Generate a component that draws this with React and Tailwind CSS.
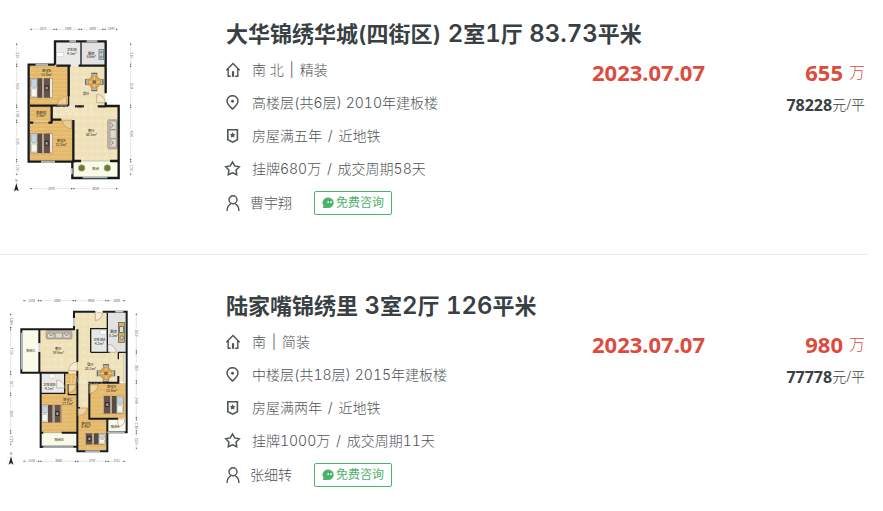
const cjk = "font-['Inter','Noto_Sans_CJK_SC',sans-serif]";

function HomeIcon() {
  return (
    <svg className="h-4 w-4 shrink-0" viewBox="0 0 16 16" fill="none" stroke="currentColor" strokeWidth="1.4" aria-hidden="true">
      <path d="M.3 8.2 7 1.600l6.700 6.600M2.200 7v7.300h2.600M11.800 7v7.300H9.200" />
      <path d="M7 9.200v5.600" strokeWidth="2.2" />
    </svg>
  );
}

function PinIcon() {
  return (
    <svg className="h-4 w-4 shrink-0" viewBox="0 0 16 16" fill="none" stroke="currentColor" strokeWidth="1.5" aria-hidden="true">
      <path d="M6.500 14C4 11.600 1 9.200 1 6.200a5.500 5.500 0 0 1 11 0C12 9.200 9 11.600 6.500 14Z" />
      <circle cx="6.500" cy="6.200" r="1.500" fill="currentColor" stroke="none" />
    </svg>
  );
}

function BadgeIcon() {
  return (
    <svg className="h-4 w-4 shrink-0" viewBox="0 0 16 16" fill="none" stroke="currentColor" strokeWidth="1.6" aria-hidden="true">
      <path d="M1.800 1.800h9.600v10L6.600 14.200 1.800 11.800Z" />
      <path d="m6.600 4.200.9 1.800 2 .3-1.500 1.400.4 2-1.800-1-1.800 1 .4-2-1.500-1.400 2-.3Z" fill="currentColor" stroke="none" />
    </svg>
  );
}

function StarIcon() {
  return (
    <svg className="h-4 w-4 shrink-0 overflow-visible" viewBox="0 0 16 16" fill="none" stroke="currentColor" strokeWidth="1.5" aria-hidden="true">
      <path d="m6.500 1 2.200 3.900 4.600.9-3.200 3.300.6 4.700-4.200-1.900-4.200 1.900.6-4.700L-.3 5.800l4.600-.9Z" />
    </svg>
  );
}

function UserIcon() {
  return (
    <svg className="h-4 w-4 shrink-0" viewBox="0 0 16 16" fill="none" stroke="currentColor" strokeWidth="1.4" aria-hidden="true">
      <circle cx="7" cy="4.800" r="4" />
      <path d="M1 16c0-4 1.800-6 4-7.300M13 16c0-4-1.800-6-4-7.300" />
    </svg>
  );
}

function ChatIcon() {
  return (
    <svg className="h-3 w-3 shrink-0" viewBox="0 0 12 12" aria-hidden="true">
      <path d="M6.200.6a5.500 5.200 0 1 1 0 10.400H.8l.7-2.200A5.200 5.200 0 0 1 6.200.6Z" fill="currentColor" />
      <circle cx="6.200" cy="5.200" r=".9" fill="white" />
      <circle cx="9" cy="5.200" r=".9" fill="white" />
    </svg>
  );
}

function Bed({ x, y, w = 66, h = 58, flip = false }) {
  return (
    <g transform={flip ? `translate(${x + w} ${y}) scale(-1 1)` : `translate(${x} ${y})`}>
      <rect width={w} height={h} fill="#eee9df" stroke="#8a7356" strokeWidth="1.500" />
      <rect x="2" y="3" width="17" height={h / 2 - 5} rx="4" fill="#c5d4dc" stroke="#6d7378" />
      <rect x="2" y={h / 2 + 2} width="17" height={h / 2 - 5} rx="4" fill="#f7f5ec" stroke="#6d7378" />
      <rect x="20" width="14" height={h} fill="#594a42" />
      <rect x="34" width="6" height={h} fill="#b5a899" />
      <rect x="40" width="18" height={h} fill="#665248" />
      <rect x="42" y={h / 2 - 8} width="12" height="15" fill="#302a29" />
      <path d={`M45 ${h / 2 - 4}h6v8h-6z`} fill="#b5a899" />
    </g>
  );
}

function Dining({ x, y }) {
  return (
    <g transform={`translate(${x} ${y})`} stroke="#5f6060" strokeWidth="1.500">
      {[0, 90, 180, 270].map((a) => (
        <g key={a} transform={`rotate(${a})`}>
          <rect x="-8" y="-26" width="16" height="12" rx="2" fill="#b9b9b2" />
          <path d="M-9-26H9" strokeWidth="3" />
        </g>
      ))}
      <circle r="18" fill="#dca54b" stroke="#ad7a30" />
      <path d="M-17 0h34M0-17v34" stroke="#f0d79c" strokeWidth="3" />
      <circle r="5" fill="#7b6a50" />
    </g>
  );
}

function Sofa({ x, y, w, h }) {
  const tall = h > w;
  return (
    <g transform={`translate(${x} ${y})`} stroke="#82786d" strokeWidth="1.500" fill="#c3bbb0">
      <rect width={w} height={h} rx="4" />
      {[0, 1, 2].map((i) => (
        <rect
          key={i}
          x={tall ? 7 : 4 + (i * (w - 8)) / 3}
          y={tall ? 4 + (i * (h - 8)) / 3 : 7}
          width={tall ? w - 10 : (w - 12) / 3}
          height={tall ? (h - 12) / 3 : h - 10}
          rx="3"
          fill="#ded8cd"
        />
      ))}
      <path d={tall ? "M9 10l8 7-8 7M10 63l8 6-8 6" : "M9 8l7 8 7-8M55 8l7 8 7-8"} fill="none" stroke="#62584e" strokeWidth="2" />
    </g>
  );
}

function Label({ x, y, name, area }) {
  return (
    <g fontSize="10" fontWeight="500" fill="#39342b" textAnchor="middle">
      <text x={x} y={y}>{name}</text>
      {area && <text x={x} y={y + 11}>{area}</text>}
    </g>
  );
}

function Ruler({ at, stops, values, vertical = false }) {
  return (
    <g transform={vertical ? `translate(${at} 0) rotate(90)` : `translate(0 ${at})`} fill="#555" stroke="#999" fontSize="9">
      {values.map((v, i) => {
        const a = stops[i];
        const b = stops[i + 1];
        const m = (a + b) / 2;
        return (
          <g key={i}>
            <path d={`M${a} 0H${m - 13}M${m + 13} 0H${b}`} strokeWidth=".8" />
            <path d={`M${a - 1} 0l5-2.500v5zM${b - 1} 0l-5-2.500v5z`} stroke="none" />
            <text x={m} y="3" textAnchor="middle" stroke="none">{v}</text>
          </g>
        );
      })}
    </g>
  );
}

function North({ x, y }) {
  return (
    <g transform={`translate(${x} ${y})`}>
      <circle r="12" fill="none" stroke="#ddd" />
      <path d="M0-13 7 12 0 7-7 12Z" fill="#222" />
      <text x="0" y="-17" fontSize="9" textAnchor="middle" fill="#444">N</text>
    </g>
  );
}

function Patterns({ id }) {
  return (
    <defs>
      <pattern id={`${id}-wood`} width="36" height="24" patternUnits="userSpaceOnUse">
        <rect width="36" height="24" fill="#e6bb6e" />
        <path d="M0 0h36M0 12h36M9 0v12M27 12v12" stroke="#daaa5c" strokeWidth="1" />
        <path d="M2 5h28M8 18h25" stroke="#edc983" strokeWidth="2" />
      </pattern>
      <pattern id={`${id}-tile`} width="22" height="22" patternUnits="userSpaceOnUse">
        <rect width="22" height="22" fill="#f0e2bb" />
        <path d="M0 0h22M0 0v22" stroke="#e9d6a6" />
        <path d="M4 15l5-6 7 3" stroke="#f5ebcd" strokeWidth="3" fill="none" />
      </pattern>
    </defs>
  );
}

function PlanA() {
  return (
    <svg className="h-full w-full font-['Noto_Sans_CJK_SC',sans-serif]" viewBox="0 0 450 555" role="img" aria-label="两室一厅户型图">
      <Patterns id="a" />
      <path d="M205 152H316V272H355V438H220V316H155V276H205Z" fill="url(#a-tile)" />
      <rect x="165" y="82" width="78" height="70" fill="#e8e8e6" />
      <rect x="243" y="82" width="73" height="70" fill="#e2e2e2" />
      <rect x="90" y="152" width="115" height="120" fill="url(#a-wood)" />
      <rect x="90" y="272" width="66" height="48" fill="url(#a-wood)" />
      <path d="M90 320H155V314H218V438H90Z" fill="url(#a-wood)" />
      <rect x="220" y="438" width="135" height="48" fill="#fafae8" />
      <Bed x={92} y={190} />
      <Bed x={92} y={356} />
      <Dining x={283} y={201} />
      <Sofa x={323} y={314} w={29} h={88} />
      <rect x="169" y="113" width="22" height="12" fill="#fff" stroke="#aaa" />
      <g fill="#c2d1d3" stroke="#55656b" strokeWidth="2"><rect x="297" y="104" width="14" height="29" /><circle cx="304" cy="112" r="3" /><circle cx="304" cy="126" r="3" /></g>
      <g fill="#687b3a" stroke="#b0b890" strokeWidth="2"><circle cx="245" cy="459" r="10" /><circle cx="322" cy="459" r="10" /></g>
      <g fill="none" stroke="#171b1c" strokeWidth="7">
        <path d="M165 149V79H317V235M317 262V273H356V489H217V440M165 149H86V440H220V315M169 152H212M236 152H318M206 152V244M90 272H205M155 272V322M156 314H184M225 274H252M293 274H317M90 323H100M145 323H157M217 438H243M330 438H356" />
        <path d="M243 82V152M206 152V272" strokeWidth="4" />
      </g>
      <g stroke="#c7d1d3" strokeWidth="6"><path d="M208 79H228M260 79H292M107 149H144M123 440H165M248 487H322M215 460V478" /></g>
      <g stroke="#849094" strokeWidth="1.500" fill="none"><path d="M208 79H228M260 79H292M107 149H144M123 440H165M248 487H322M243 438H330M100 323H145" /></g>
      <g fill="#f5eddb" stroke="#a58351" strokeWidth="1.500">
        <path d="M200 272H172A28 28 0 0 1 200 244ZM214 316V342A28 28 0 0 1 187 316ZM316 263H290V238A26 26 0 0 1 316 263Z" fillOpacity=".35" />
      </g>
      <text x="222" y="300" fontSize="34" textAnchor="middle" fill="#fff" fillOpacity=".3">LIANJIA</text>
      <Label x={215} y={109} name="卫生间" area="4.1m²" />
      <Label x={274} y={119} name="厨房" area="6.6m²" />
      <Label x={140} y={171} name="卧室B" area="11.0m²" />
      <Label x={258} y={240} name="餐厅" />
      <Label x={123} y={296} name="衣帽间" area="2.8m²" />
      <Label x={274} y={351} name="客厅" area="30.5m²" />
      <Label x={184} y={381} name="卧室A" area="12.5m²" />
      <Label x={287} y={464} name="阳台" />
      <Ruler at={43} stops={[91, 167, 242, 313, 354]} values={["2372", "2390", "2080", "1347"]} />
      <Ruler at={521} stops={[91, 219, 354]} values={["3875", "3859"]} />
      <Ruler at={50} stops={[85, 152, 275, 320, 438, 482]} values={["2130", "3450", "1285", "3275", "1292"]} vertical />
      <Ruler at={392} stops={[85, 152, 275, 438, 482]} values={["2130", "3514", "4500", "1292"]} vertical />
      <North x={49} y={517} />
    </svg>
  );
}

function PlanB() {
  return (
    <svg className="h-full w-full font-['Noto_Sans_CJK_SC',sans-serif]" viewBox="0 -9 450 555" role="img" aria-label="三室两厅户型图">
      <Patterns id="b" />
      <path d="M225 68H322V187H372V277H268V354H232V248H120V120H225Z" fill="url(#b-tile)" />
      <rect x="66" y="118" width="52" height="130" fill="#fafae9" />
      <rect x="322" y="68" width="56" height="119" fill="#e2e2e2" />
      <rect x="274" y="117" width="48" height="70" fill="#e6e8e7" />
      <rect x="122" y="250" width="72" height="60" fill="#e9eae8" />
      <path d="M194 250H230V428H122V310H194Z" fill="url(#b-wood)" />
      <rect x="268" y="279" width="109" height="106" fill="url(#b-wood)" />
      <path d="M232 354H268V385H321V481H232Z" fill="url(#b-wood)" />
      <rect x="120" y="429" width="110" height="42" fill="#fafae9" />
      <rect x="322" y="387" width="57" height="40" fill="#fafae9" />
      <Bed x={124} y={345} w={60} h={52} />
      <Bed x={310} y={318} w={60} h={52} flip />
      <Bed x={256} y={430} w={60} h={33} flip />
      <Sofa x={138} y={122} w={78} h={25} />
      <Dining x={318} y={250} />
      <g fill="#c9b06b" stroke="#56513f" strokeWidth="2"><rect x="355" y="97" width="18" height="60" /><rect x="358" y="110" width="12" height="17" fill="#ddd" /><circle cx="365" cy="143" r="5" fill="#ddd" /></g>
      <rect x="300" y="121" width="19" height="12" rx="4" fill="#fff" stroke="#999" />
      <rect x="148" y="252" width="17" height="12" rx="4" fill="#fff" stroke="#999" />
      <g fill="none" stroke="#171b1c" strokeWidth="6">
        <path d="M222 84V65H286M308 65H380V427H321M222 108V118H64V248H122V474M118 118V160M118 185V248M120 248H205M232 118V216M232 242V484H322V386M355 258V278H268V386H354M230 354H240M120 428H130M185 428H230M120 470H230" />
        <path d="M194 250V310H122M272 187V116H322M322 68V187H272M322 187H330M354 187H378M355 187V208M205 282V314H230" strokeWidth="4" />
      </g>
      <g stroke="#c7d1d3" strokeWidth="5"><path d="M222 84V108M65 128V238M130 471H220M256 484H300M322 427H374M346 65H370M118 160V185" /></g>
      <g stroke="#849094" strokeWidth="1.500" fill="none"><path d="M222 84V108M65 128V238M130 471H220M256 484H300M322 427H374M130 428H185M372 187V278" /></g>
      <g fill="#fff" fillOpacity=".35" stroke="#a58351" strokeWidth="1.500">
        <path d="M286 65V92A25 25 0 0 0 308 70ZM232 242H206A26 26 0 0 1 232 216ZM194 294H170V270A24 24 0 0 1 194 294ZM204 284H228A24 24 0 0 1 204 308ZM268 284H294A26 26 0 0 1 268 310ZM234 354H262A28 28 0 0 1 234 378ZM324 187V163A25 25 0 0 1 349 187ZM354 386V410A20 20 0 0 0 374 388Z" />
      </g>
      <text x="250" y="283" fontSize="32" textAnchor="middle" fill="#fff" fillOpacity=".3">LIANJIA</text>
      <Label x={92} y={187} name="阳台C" />
      <Label x={175} y={181} name="客厅" area="19.6m²" />
      <Label x={298} y={153} name="卫生间A" area="4.2m²" />
      <Label x={341} y={130} name="厨房" area="5.2m²" />
      <Label x={271} y={229} name="餐厅" area="20.2m²" />
      <Label x={148} y={288} name="卫生间B" area="4.2m²" />
      <Label x={203} y={334} name="卧室C" area="17.1m²" />
      <Label x={335} y={295} name="卧室A" area="11.8m²" />
      <Label x={258} y={404} name="卧室B" area="8.4m²" />
      <Label x={345} y={414} name="阳台A" />
      <Label x={177} y={452} name="阳台B" />
      <Ruler at={32} stops={[70, 120, 224, 322, 377]} values={["1510", "3350", "3400", "1800"]} />
      <Ruler at={514} stops={[70, 120, 231, 322, 377]} values={["1510", "3500", "2757", "1721"]} />
      <Ruler at={32} stops={[71, 117, 250, 314, 427, 467]} values={["1380", "4250", "1822", "3300", "1270"]} vertical />
      <Ruler at={409} stops={[71, 187, 277, 387, 427, 479]} values={["3650", "2850", "3400", "1280", "1570"]} vertical />
      <North x={33} y={512} />
    </svg>
  );
}

const listings = [
  {
    title: "大华锦绣华城(四街区) 2室1厅 83.73平米",
    facing: "南 北 | 精装",
    floor: "高楼层(共6层) 2010年建板楼",
    tags: "房屋满五年 / 近地铁",
    deal: "挂牌680万 / 成交周期58天",
    agent: "曹宇翔",
    date: "2023.07.07",
    price: "655",
    unit: "78228",
    Plan: PlanA,
  },
  {
    title: "陆家嘴锦绣里 3室2厅 126平米",
    facing: "南 | 简装",
    floor: "中楼层(共18层) 2015年建板楼",
    tags: "房屋满两年 / 近地铁",
    deal: "挂牌1000万 / 成交周期11天",
    agent: "张细转",
    date: "2023.07.07",
    price: "980",
    unit: "77778",
    Plan: PlanB,
  },
];

// Figures are set a step larger than the Chinese text of the title.
function TitleText({ text }) {
  return text.split(/([\d. ]+)/).map((part, i) =>
    i % 2 ? (
      <span key={i} className="text-2xl leading-7">{part}</span>
    ) : (
      part
    ),
  );
}

function InfoRow({ Icon, text }) {
  return (
    <div className="flex h-[33px] items-center gap-2.5">
      <Icon />
      <span className="whitespace-nowrap">
        {text.split(/([|/])/).map((part, i) =>
          i % 2 ? (
            <span key={i} className="mx-0.5">{part}</span>
          ) : (
            part
          ),
        )}
      </span>
    </div>
  );
}

function Listing({ title, facing, floor, tags, deal, agent, date, price, unit, Plan }) {
  return (
    <li className="flex gap-[76px] border-b border-[#ebebeb] pr-[3px] pb-[33px] last:border-b-0">
      <a href="#" className="mt-[15px] h-[185px] w-[150px] shrink-0">
        <Plan />
      </a>
      <div className="min-w-0 flex-1 pt-5">
        <h2 className="h-[33px] text-[22px] leading-7 font-semibold whitespace-nowrap text-[#394043] tabular-nums">
          <a href="#"><TitleText text={title} /></a>
        </h2>
        <div className="flex">
          <div className="min-w-0 flex-1 text-sm font-light text-[#4f5456] tabular-nums">
            <InfoRow Icon={HomeIcon} text={facing} />
            <InfoRow Icon={PinIcon} text={floor} />
            <InfoRow Icon={BadgeIcon} text={tags} />
            <InfoRow Icon={StarIcon} text={deal} />
            <div className="flex h-9 items-center">
              <UserIcon />
              <a href="#" className="ml-2 w-[64px]">{agent}</a>
              <button type="button" className="flex h-6 w-[78px] items-center justify-center gap-0.5 rounded-xs border border-[#4db36a] text-xs font-normal whitespace-nowrap text-[#4db36a]">
                <ChatIcon />
                免费咨询
              </button>
            </div>
          </div>
          <div className="w-[113px] shrink-0 font-['Noto_Sans','Open_Sans',sans-serif] text-[22px] leading-[38px] font-bold text-[#db4c3f]">
            {date}
          </div>
          <div className="w-[160px] shrink-0 text-right font-['Noto_Sans','Noto_Sans_CJK_SC',sans-serif]">
            <div className="flex h-[38px] items-center justify-end gap-1.5 text-[#db4c3f]">
              <strong className="text-[22px] font-bold">{price}</strong>
              <span className="text-base font-light">万</span>
            </div>
            <div className="flex h-7 items-center justify-end text-sm font-light text-[#394043]">
              <strong className="text-base font-bold">{unit}</strong>元/平
            </div>
          </div>
        </div>
      </div>
    </li>
  );
}

export default function App() {
  return (
    <main className={`min-h-screen bg-white pr-[15px] ${cjk}`}>
      <ul className="flex flex-col gap-[17px]">
        {listings.map((item) => (
          <Listing key={item.title} {...item} />
        ))}
      </ul>
    </main>
  );
}
